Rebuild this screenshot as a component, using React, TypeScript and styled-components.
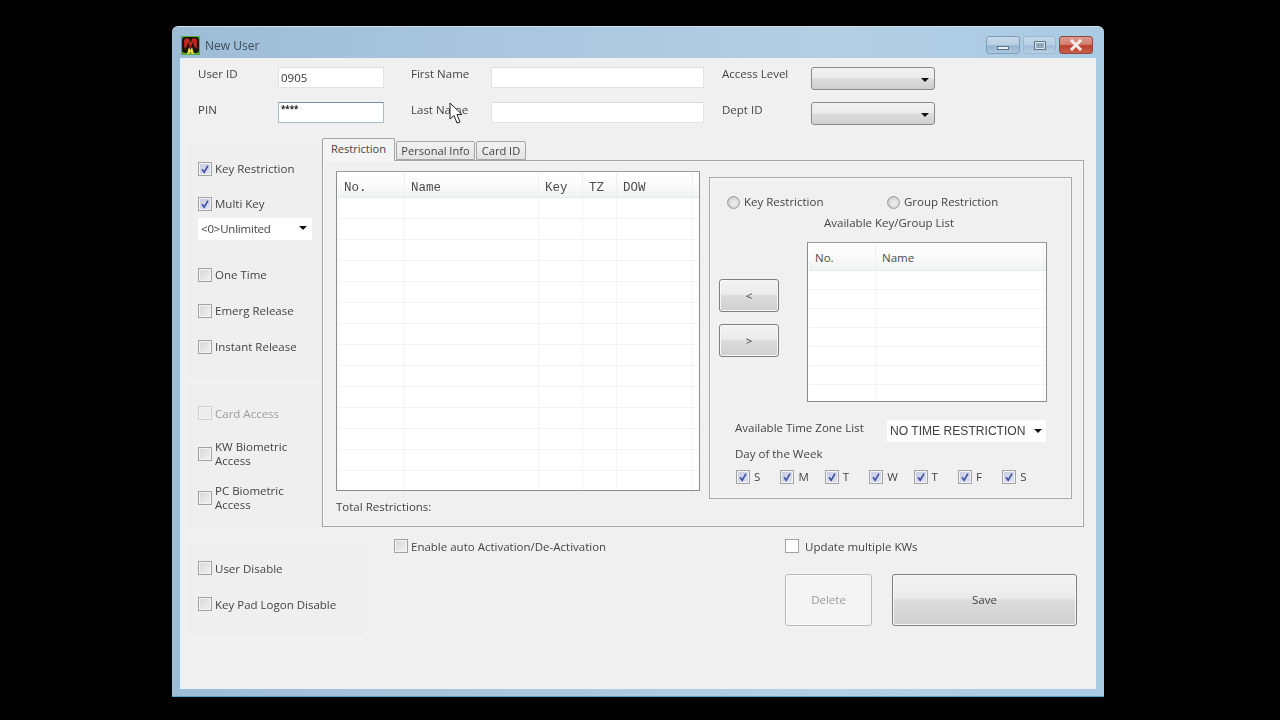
import React from 'react';
import styled, { createGlobalStyle } from 'styled-components';

const Global = createGlobalStyle`
  html, body { margin: 0; height: 720px; background: #000; overflow: hidden; }
  #root { height: 720px; }
`;

const Win = styled.div`
  position: relative;
  box-sizing: border-box;
  width: 932px;
  height: 671px;
  margin: 26px 0 0 172px;
  padding: 0 8px 8px;
  border-radius: 6px 6px 0 0;
  background: linear-gradient(90deg, #9dbcd6 0%, #a9c6de 35%, #b4cfe4 70%, #a9cbe4 100%);
  border-top: 1px solid #d4e0ea;
  border-bottom: 1px solid #49a7c4;
  filter: blur(0.45px);
  font-family: "Open Sans", "Liberation Sans", Arial, sans-serif;
  font-size: 11.5px;
  line-height: 15px;
  color: #444;
`;

const TitleBar = styled.div`
  display: flex;
  align-items: center;
  height: 31px;
`;

const TitleText = styled.div`
  margin-left: 5px;
  padding-top: 5px;
  font-size: 12px;
  color: #3f4e5a;
  flex: 1;
`;

const LogoBox = styled.svg`
  width: 19px;
  height: 19px;
  margin: 6px 0 0 1px;
`;

const Caption = styled.div`
  display: flex;
  gap: 3px;
  margin: 5px 3px 0 0;
`;

const CapBtn = styled.div<{ $w: number; $kind: 'min' | 'max' | 'close' }>`
  display: flex;
  align-items: center;
  justify-content: center;
  box-sizing: border-box;
  width: ${p => p.$w}px;
  height: 18px;
  border-radius: 3px;
  border: 1px solid ${p => (p.$kind === 'close' ? '#8d4a40' : p.$kind === 'min' ? '#7d9fbd' : '#9dbad2')};
  background: ${p =>
    p.$kind === 'close'
      ? 'linear-gradient(#dc9a8e 0%, #d4806f 45%, #bb3f2d 55%, #c8604c 100%)'
      : p.$kind === 'min'
        ? 'linear-gradient(#c6d8e8 0%, #b8cfe3 48%, #94b3cf 55%, #adc8df 100%)'
        : 'linear-gradient(#c3d7e8 0%, #b7cfe4 48%, #a2bed7 55%, #b5cfe4 100%)'};
`;

const MinGlyph = styled.div`
  width: 12px;
  height: 4px;
  margin-top: 5px;
  background: #e9eef3;
  border: 1px solid #5c7488;
  box-sizing: border-box;
`;

const MaxGlyph = styled.div`
  width: 12px;
  height: 9px;
  box-sizing: border-box;
  background: #8fa8bc;
  border: 2px solid #e2e9ef;
  outline: 1px solid #5c7488;
  outline-offset: -1px;
`;

const Client = styled.div`
  box-sizing: border-box;
  height: 631px;
  padding: 9px 12px 0 10px;
  background: #f0f0f0;
  box-shadow: inset 4px 0 3px -1px #e6f1fa;
`;

const FormGrid = styled.div`
  display: grid;
  grid-template-columns: 80px 106px 27px 80px 213px 18px 89px 124px;
  grid-auto-rows: 23px;
  row-gap: 12px;
  padding-left: 8px;
`;

const FieldLabel = styled.div<{ $col: number; $mt?: number }>`
  grid-column: ${p => p.$col};
  align-self: start;
  margin-top: ${p => p.$mt ?? 0}px;
`;

const TextBox = styled.div<{ $col: number; $focus?: boolean }>`
  grid-column: ${p => p.$col};
  box-sizing: border-box;
  height: 21px;
  padding: ${p => (p.$focus ? '0 2px' : '2px 2px')};
  background: #fff;
  border: 1px solid ${p => (p.$focus ? '#a9bccd' : '#e2e2e2')};
  border-top-color: ${p => (p.$focus ? '#6f8eab' : '#dcdcdc')};
  border-radius: 1px;
  color: #333;
`;

const PinMask = styled.span`
  display: block;
  font-size: 8px;
  font-weight: 700;
  line-height: 12px;
  color: #222;
`;

const ArrowDown = styled.span`
  flex: none;
  width: 0;
  height: 0;
  border-left: 4px solid transparent;
  border-right: 4px solid transparent;
  border-top: 4px solid #111;
`;

const ComboBtn = styled.div<{ $col: number }>`
  grid-column: ${p => p.$col};
  box-sizing: border-box;
  display: flex;
  align-items: center;
  justify-content: flex-end;
  padding: 2px 5px 0 0;
  height: 23px;
  border: 1px solid #8a8a8a;
  border-radius: 3px;
  background: linear-gradient(#f2f2f2 0%, #ebebeb 48%, #dddddd 52%, #cfcfcf 100%);
`;

const MainRow = styled.div`
  display: flex;
  margin-top: 13px;
`;

const LeftCol = styled.div`
  display: flex;
  flex-direction: column;
  gap: 8px;
  width: 132px;
  padding-top: 7px;
`;

const SideGroup = styled.div<{ $h: number; $w?: number; $pt: number; $mt?: number }>`
  box-sizing: border-box;
  flex: none;
  display: flex;
  flex-direction: column;
  height: ${p => p.$h}px;
  width: ${p => (p.$w ? `${p.$w}px` : 'auto')};
  margin-top: ${p => p.$mt ?? 0}px;
  padding: ${p => p.$pt}px 0 0 7px;
  border: 1px solid #ebebeb;
  border-radius: 2px;
  background: #efefef;
`;

const Box = styled.span<{ $on?: boolean; $muted?: boolean; $white?: boolean }>`
  flex: none;
  box-sizing: border-box;
  display: flex;
  align-items: center;
  justify-content: center;
  width: 14px;
  height: 14px;
  margin-top: 2px;
  border: 1px solid ${p => (p.$muted ? '#cfcfcf' : '#a3a3a3')};
  background: ${p =>
    p.$on
      ? 'linear-gradient(135deg, #c5cbe4, #dfe2f1)'
      : p.$muted
        ? '#ececec'
        : p.$white
          ? '#fbfbfb'
          : 'linear-gradient(135deg, #d6d6d6, #f2f2f2)'};
  box-shadow: inset 0 0 0 1px ${p => (p.$white ? '#fff' : '#f3f3f3')};
`;

const CheckRow = styled.div<{ $mt?: number; $gap?: number; $muted?: boolean; $even?: boolean }>`
  display: flex;
  align-items: center;
  gap: ${p => p.$gap ?? 3}px;
  margin-top: ${p => p.$mt ?? 0}px;
  min-height: 16px;
  color: ${p => (p.$muted ? '#9c9c9c' : 'inherit')};
  ${Box} {
    margin-top: ${p => (p.$even ? 0 : 2)}px;
  }
`;

const TwoLine = styled.div`
  line-height: 14px;
  width: 84px;
`;

const CheckMark = styled.svg`
  width: 10px;
  height: 10px;
`;

const Tick = () => (
  <CheckMark viewBox="0 0 10 10">
    <path d="M2 5.2 L4.2 8.2 L8 1.6" fill="none" stroke="#3d4fa0" strokeWidth="1.6" />
  </CheckMark>
);

const Check = ({ on, muted, white }: { on?: boolean; muted?: boolean; white?: boolean }) => (
  <Box $on={on} $muted={muted} $white={white}>
    {on ? <Tick /> : null}
  </Box>
);

const WhiteCombo = styled.div<{ $w: number; $mt?: number; $h?: number }>`
  box-sizing: border-box;
  display: flex;
  align-items: center;
  justify-content: space-between;
  width: ${p => p.$w}px;
  height: ${p => p.$h ?? 22}px;
  margin-top: ${p => p.$mt ?? 0}px;
  padding: 0 5px 2px 3px;
  background: #fff;
  color: #444;
  letter-spacing: -0.2px;
`;

const TabsCol = styled.div`
  width: 762px;
`;

const TabStrip = styled.div`
  display: flex;
  align-items: flex-end;
  height: 22px;
  gap: 1px;
`;

const Tab = styled.div<{ $active?: boolean; $w: number }>`
  position: relative;
  box-sizing: border-box;
  display: flex;
  align-items: center;
  justify-content: center;
  width: ${p => p.$w}px;
  height: ${p => (p.$active ? 23 : 19)}px;
  margin-bottom: ${p => (p.$active ? -1 : 0)}px;
  border: 1px solid #a5a5a5;
  border-bottom: ${p => (p.$active ? 'none' : '1px solid #a5a5a5')};
  background: ${p => (p.$active ? '#f4f4f4' : 'linear-gradient(#f2f2f2, #e3e3e3)')};
  border-radius: 2px 2px 0 0;
  z-index: ${p => (p.$active ? 1 : 0)};
  padding-bottom: ${p => (p.$active ? 3 : 0)}px;
  font-size: 11.1px;
`;

const Panel = styled.div`
  box-sizing: border-box;
  display: flex;
  height: 367px;
  padding: 10px 0 0 13px;
  border: 1px solid #a5a5a5;
  box-shadow: inset 0 0 0 1px #f8f8f8;
  background: #f0f0f0;
`;

const ListCol = styled.div`
  width: 364px;
`;

const List = styled.div<{ $w: number; $h: number }>`
  box-sizing: border-box;
  width: ${p => p.$w}px;
  height: ${p => p.$h}px;
  padding: 1px 0 0 1px;
  overflow: hidden;
  background: #fff;
  border: 1px solid #8c8c8c;
  border-top-color: #9a9a9a;
`;

const ListRow = styled.div<{ $cols: string; $h: number }>`
  display: grid;
  grid-template-columns: ${p => p.$cols};
  height: ${p => p.$h}px;
  box-sizing: border-box;
  border-bottom: 1px solid #f3f3f3;
`;

const HeadRow = styled(ListRow)`
  background: linear-gradient(#ffffff 0%, #fbfbfb 45%, #f1f2f4 100%);
  border-bottom: 1px solid #e8e9eb;
`;

const HeadCell = styled.div<{ $mono?: boolean }>`
  display: flex;
  align-items: center;
  box-sizing: border-box;
  padding: ${p => (p.$mono ? 6 : 1)}px 0 0 6px;
  border-right: 1px solid #eeeeee;
  font-family: ${p => (p.$mono ? '"Liberation Mono", "Courier New", monospace' : 'inherit')};
  font-size: ${p => (p.$mono ? '12.5px' : 'inherit')};
  color: #4c4c4c;
`;

const BodyCell = styled.div`
  border-right: 1px solid #f4f4f4;
`;

const TotalLabel = styled.div`
  margin-top: 8px;
`;

const GroupBox = styled.div`
  box-sizing: border-box;
  width: 363px;
  height: 322px;
  margin: 6px 0 0 9px;
  padding-top: 15px;
  border: 1px solid #a8a8a8;
  box-shadow: inset 0 0 0 1px #f7f7f7;
`;

const RadioRow = styled.div`
  display: flex;
  padding-left: 17px;
`;

const RadioItem = styled.div`
  display: flex;
  align-items: center;
  gap: 4px;
  width: 160px;
  height: 16px;
`;

const RadioDot = styled.span`
  box-sizing: border-box;
  width: 13px;
  height: 13px;
  margin-top: 2px;
  border-radius: 50%;
  border: 1px solid #9c9c9c;
  background: radial-gradient(circle at 55% 55%, #f5f5f5 0%, #d8d8d8 55%, #c4c4c4 75%, #ececec 100%);
`;

const ListTitle = styled.div`
  margin: 6px 0 0 114px;
`;

const MidRow = styled.div`
  display: flex;
  margin-top: 12px;
  padding-left: 9px;
`;

const ArrowCol = styled.div`
  display: flex;
  flex-direction: column;
  gap: 12px;
  width: 60px;
  margin: 37px 28px 0 0;
`;

const PushBtn = styled.div<{ $w?: number; $h: number; $off?: boolean; $pb?: number }>`
  box-sizing: border-box;
  display: flex;
  align-items: center;
  justify-content: center;
  width: ${p => (p.$w ? `${p.$w}px` : '100%')};
  height: ${p => p.$h}px;
  padding-bottom: ${p => p.$pb ?? 0}px;
  border: 1px solid ${p => (p.$off ? '#b8bcbe' : '#7f7f7f')};
  border-radius: 3px;
  color: ${p => (p.$off ? '#9a9a9a' : '#3e3e3e')};
  background: ${p =>
    p.$off ? '#f4f4f4' : 'linear-gradient(#f3f3f3 0%, #ebebeb 46%, #dcdcdc 50%, #cfcfcf 100%)'};
  box-shadow: inset 0 0 0 1px #f8f8f8;
`;

const ZoneRow = styled.div`
  display: flex;
  margin-top: 18px;
  padding-left: 25px;
`;

const ZoneLabel = styled.div`
  width: 152px;
`;

const ZoneCombo = styled(WhiteCombo)`
  font-family: "Liberation Sans", Arial, sans-serif;
  font-size: 12.1px;
  letter-spacing: 0;
  padding: 0 4px 0 3px;
  color: #3e3e3e;
`;

const DayLabel = styled.div`
  margin: 4px 0 0 25px;
`;

const DayRow = styled.div`
  display: flex;
  margin-top: 8px;
  padding-left: 26px;
`;

const DayItem = styled.div`
  display: flex;
  align-items: center;
  gap: 4px;
  width: 44.4px;
  height: 14px;
`;

const BottomRow = styled.div`
  display: flex;
  margin-top: 11px;
`;

const BottomRight = styled.div`
  margin-left: 28px;
`;

const OptionRow = styled.div`
  display: flex;
`;

const OptionItem = styled.div<{ $w: number }>`
  width: ${p => p.$w}px;
`;

const ActionRow = styled.div`
  display: flex;
  gap: 20px;
  margin-top: 20px;
  padding-left: 391px;
`;

const Pointer = styled.svg`
  position: absolute;
  left: 277px;
  top: 75px;
  width: 15px;
  height: 23px;
`;

const range = (n: number) => Array.from({ length: n }, (_, i) => i);

const ListView = ({ w, h, cols, heads, mono, headH, rowH, rows }: {
  w: number; h: number; cols: string; heads: string[]; mono?: boolean; headH: number; rowH: number; rows: number;
}) => (
  <List $w={w} $h={h}>
    <HeadRow $cols={cols} $h={headH}>
      {heads.map((t, i) => <HeadCell key={i} $mono={mono}>{t}</HeadCell>)}
    </HeadRow>
    {range(rows).map(r => (
      <ListRow key={r} $cols={cols} $h={rowH}>
        {heads.map((_, i) => <BodyCell key={i} />)}
      </ListRow>
    ))}
  </List>
);

const days = ['S', 'M', 'T', 'W', 'T', 'F', 'S'];

export default function App() {
  return (
    <>
      <Global />
      <Win>
        <TitleBar>
          <LogoBox viewBox="0 0 19 19">
            <rect width="19" height="19" fill="#4fb33c" />
            <rect x="1" y="1" width="17" height="16" rx="3" fill="#1d1410" />
            <path d="M3 4 Q5 1 8 3 L9.5 7 L11 3 Q14 1 16 4 L15.5 13 L13 10 L12 6 L9.5 12 L7 6 L6 10 L3.5 13 Z" fill="#c8261c" />
            <path d="M6 18 L8 11 L9.5 14 L11 11 L13 18 L11 18 L9.5 16 L8 18 Z" fill="#ecdf3a" />
          </LogoBox>
          <TitleText>New User</TitleText>
          <Caption>
            <CapBtn $w={34} $kind="min"><MinGlyph /></CapBtn>
            <CapBtn $w={33} $kind="max"><MaxGlyph /></CapBtn>
            <CapBtn $w={34} $kind="close">
              <svg width="16" height="12" viewBox="0 0 16 12">
                <path d="M4 2 L12 10 M12 2 L4 10" stroke="#f3ece8" strokeWidth="3" strokeLinecap="square" />
              </svg>
            </CapBtn>
          </Caption>
        </TitleBar>
        <Client>
          <FormGrid>
            <FieldLabel $col={1} $mt={-1}>User ID</FieldLabel>
            <TextBox $col={2}>0905</TextBox>
            <FieldLabel $col={4} $mt={-1}>First Name</FieldLabel>
            <TextBox $col={5} />
            <FieldLabel $col={7} $mt={-1}>Access Level</FieldLabel>
            <ComboBtn $col={8}><ArrowDown /></ComboBtn>
            <FieldLabel $col={1}>PIN</FieldLabel>
            <TextBox $col={2} $focus><PinMask>****</PinMask></TextBox>
            <FieldLabel $col={4}>Last Name</FieldLabel>
            <TextBox $col={5} />
            <FieldLabel $col={7}>Dept ID</FieldLabel>
            <ComboBtn $col={8}><ArrowDown /></ComboBtn>
          </FormGrid>
          <MainRow>
            <LeftCol>
              <SideGroup $h={232} $pt={14}>
                <CheckRow><Check on />Key Restriction</CheckRow>
                <CheckRow $mt={19}><Check on />Multi Key</CheckRow>
                <WhiteCombo $w={114} $mt={7}>&lt;0&gt;Unlimited<ArrowDown /></WhiteCombo>
                <CheckRow $mt={26}><Check />One Time</CheckRow>
                <CheckRow $mt={20}><Check />Emerg Release</CheckRow>
                <CheckRow $mt={20}><Check />Instant Release</CheckRow>
              </SideGroup>
              <SideGroup $h={142} $pt={19}>
                <CheckRow $muted $even><Check muted />Card Access</CheckRow>
                <CheckRow $mt={19} $even><Check /><TwoLine>KW Biometric Access</TwoLine></CheckRow>
                <CheckRow $mt={16} $even><Check /><TwoLine>PC Biometric Access</TwoLine></CheckRow>
              </SideGroup>
            </LeftCol>
            <TabsCol>
              <TabStrip>
                <Tab $active $w={73}>Restriction</Tab>
                <Tab $w={79}>Personal Info</Tab>
                <Tab $w={50}>Card ID</Tab>
              </TabStrip>
              <Panel>
                <ListCol>
                  <ListView
                    w={364}
                    h={320}
                    cols="67px 134px 44px 34px 76px"
                    heads={['No.', 'Name', 'Key', 'TZ', 'DOW']}
                    mono
                    headH={25}
                    rowH={21}
                    rows={14}
                  />
                  <TotalLabel>Total Restrictions:</TotalLabel>
                </ListCol>
                <GroupBox>
                  <RadioRow>
                    <RadioItem><RadioDot />Key Restriction</RadioItem>
                    <RadioItem><RadioDot />Group Restriction</RadioItem>
                  </RadioRow>
                  <ListTitle>Available Key/Group List</ListTitle>
                  <MidRow>
                    <ArrowCol>
                      <PushBtn $h={33}>&lt;</PushBtn>
                      <PushBtn $h={33}>&gt;</PushBtn>
                    </ArrowCol>
                    <ListView
                      w={240}
                      h={160}
                      cols="67px 168px"
                      heads={['No.', 'Name']}
                      headH={27}
                      rowH={19}
                      rows={7}
                    />
                  </MidRow>
                  <ZoneRow>
                    <ZoneLabel>Available Time Zone List</ZoneLabel>
                    <ZoneCombo $w={159}>NO TIME RESTRICTION<ArrowDown /></ZoneCombo>
                  </ZoneRow>
                  <DayLabel>Day of the Week</DayLabel>
                  <DayRow>
                    {days.map((d, i) => <DayItem key={i}><Check on />{d}</DayItem>)}
                  </DayRow>
                </GroupBox>
              </Panel>
            </TabsCol>
          </MainRow>
          <BottomRow>
            <SideGroup $h={88} $w={176} $pt={14} $mt={7}>
              <CheckRow $even><Check />User Disable</CheckRow>
              <CheckRow $mt={20} $even><Check />Key Pad Logon Disable</CheckRow>
            </SideGroup>
            <BottomRight>
              <OptionRow>
                <OptionItem $w={391}><CheckRow $even><Check />Enable auto Activation/De-Activation</CheckRow></OptionItem>
                <OptionItem $w={280}><CheckRow $gap={6} $even><Check white />Update multiple KWs</CheckRow></OptionItem>
              </OptionRow>
              <ActionRow>
                <PushBtn $w={87} $h={52} $off $pb={2}>Delete</PushBtn>
                <PushBtn $w={185} $h={52} $pb={2}>Save</PushBtn>
              </ActionRow>
            </BottomRight>
          </BottomRow>
        </Client>
        <Pointer viewBox="0 0 15 23">
          <path d="M1 1 L1 17 L5 13.5 L8 21 L11 20 L8 12.5 L13 12.5 Z" fill="#fff" stroke="#222" strokeWidth="1" strokeLinejoin="round" />
        </Pointer>
      </Win>
    </>
  );
}
